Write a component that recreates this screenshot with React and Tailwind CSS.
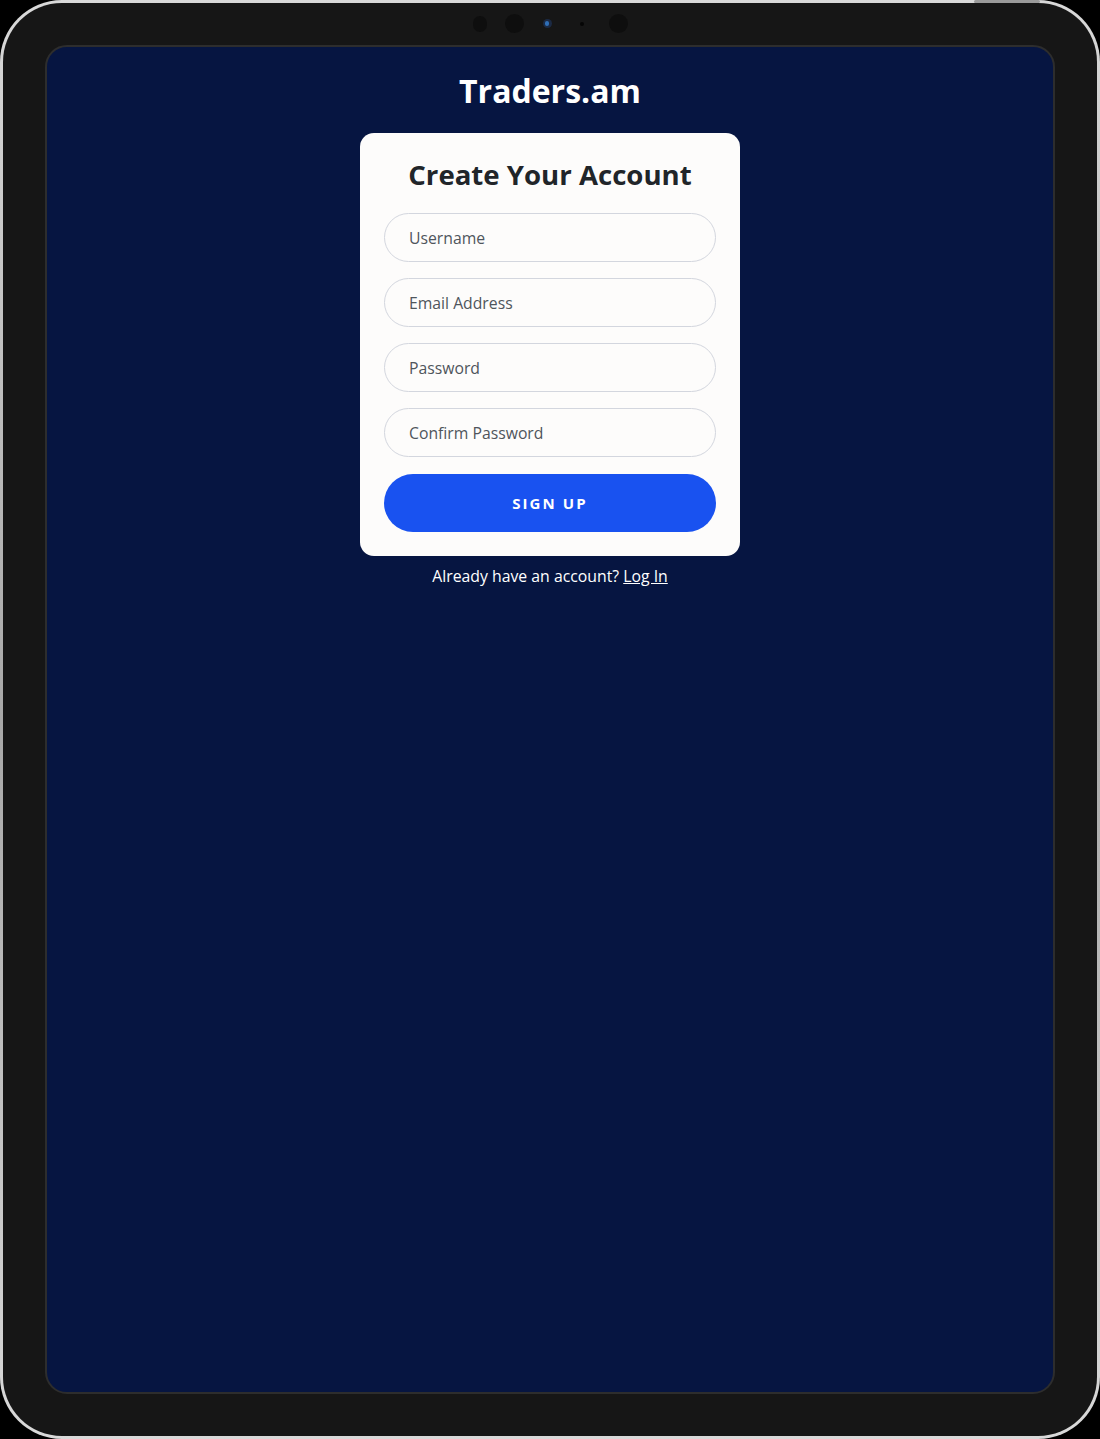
import { useState } from "react";

const FONT = { fontFamily: '"Open Sans", "Noto Sans", sans-serif' };

// Form field (pill shaped)
function Field({ placeholder, type = "text" }) {
  return (
    <input
      type={type}
      placeholder={placeholder}
      className="h-[49px] w-full rounded-full border border-[#d3d6de] bg-[#fdfcfb] px-6 text-[15.75px] text-[#212529] outline-none placeholder:text-[#4f555c]"
    />
  );
}

export default function App() {
  const [form, setForm] = useState({});

  return (
    <div className="min-h-[1439px] w-[1100px] bg-black" style={FONT}>
      {/* Tablet frame */}
      <div className="relative h-[1439px] w-[1100px] rounded-[62px] bg-gradient-to-b from-[#d9d9d9] via-[#a8a8a8] to-[#d9d9d9] p-[3px]">
        {/* Hardware buttons */}
        <div className="absolute right-[60px] top-0 h-[3px] w-[66px] rounded-full bg-[#9a9a9a]" />

        <div className="relative h-full rounded-[59px] bg-[#161616] p-[42px]">
          {/* Camera array */}
          <div className="absolute left-0 right-0 top-[11px] flex items-center justify-center">
            <div className="flex items-center">
              <span className="mr-[18px] h-[16px] w-[14px] rounded-full bg-[#0e0e0e]" />
              <span className="mr-[19px] h-[19px] w-[19px] rounded-full bg-[#0e0e0e]" />
              <span className="mr-[28px] flex h-[9px] w-[9px] items-center justify-center rounded-full bg-[#1b2a44]">
                <span className="h-[5px] w-[4px] rounded-full bg-[#2f6fb7]" />
              </span>
              <span className="mr-[25px] h-[4px] w-[4px] rounded-full bg-[#050505]" />
              <span className="h-[19px] w-[19px] rounded-full bg-[#0e0e0e]" />
            </div>
          </div>

          {/* Screen */}
          <div className="flex h-full flex-col items-center rounded-[22px] border-2 border-[#2d2d2d] bg-[#061541] pt-[22px]">
            <h1 className="text-[32px] font-bold leading-[44px] text-white">Traders.am</h1>

            <div className="mt-[20px] w-[380px] rounded-[14px] bg-[#fdfcfb] px-6 pb-6 pt-[22px]">
              <h2 className="mb-5 text-center text-[27.6px] font-bold leading-[38px] text-[#212529]">
                Create Your Account
              </h2>
              <form
                className="flex flex-col gap-4"
                onSubmit={(e) => e.preventDefault()}
                onChange={(e) => setForm({ ...form, [e.target.name]: e.target.value })}
              >
                <Field placeholder="Username" />
                <Field placeholder="Email Address" type="email" />
                <Field placeholder="Password" type="password" />
                <Field placeholder="Confirm Password" type="password" />
                <button
                  type="submit"
                  className="mt-px h-[58px] w-full rounded-full bg-[#1952f0] text-[15px] font-bold tracking-[0.14em] text-white"
                >
                  SIGN UP
                </button>
              </form>
            </div>

            <p className="mt-[9px] text-[15.8px] leading-[22px] text-white">
              Already have an account?{" "}
              <a href="#" className="underline">
                Log In
              </a>
            </p>
          </div>
        </div>
      </div>
    </div>
  );
}
